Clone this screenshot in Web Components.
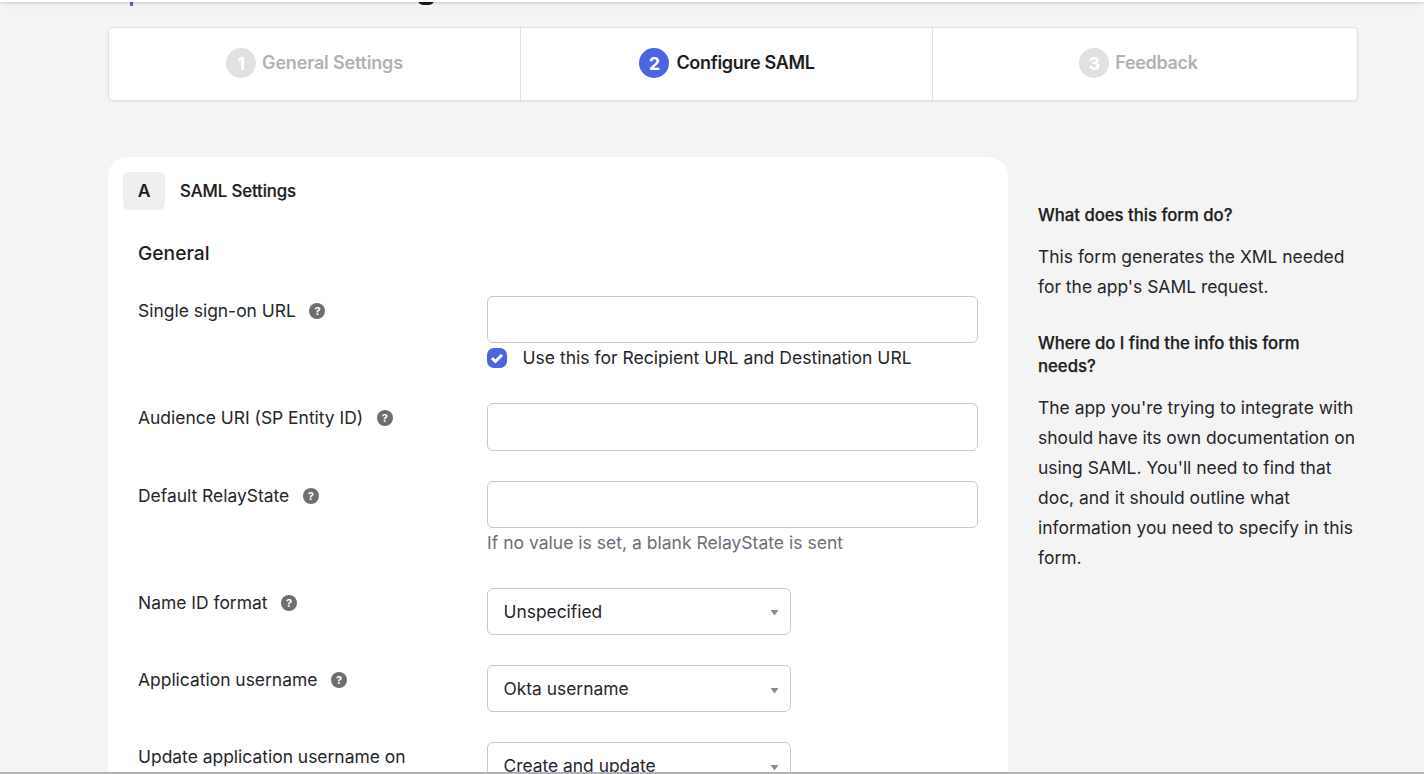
<!DOCTYPE html>
<html lang="en"><head><meta charset="utf-8"><title>Configure SAML</title>
<style>
html,body{margin:0;padding:0;height:774px;overflow:hidden;background:#f4f4f4;}
body{font-family:Inter,"Liberation Sans",sans-serif;color:#1d1d21;}
</style></head><body>
<app-page>
  <step-bar>
    <step-item num="1" state="off">General Settings</step-item>
    <step-item num="2" state="on">Configure SAML</step-item>
    <step-item num="3" state="off">Feedback</step-item>
  </step-bar>
  <main-columns>
    <form-card letter="A" title="SAML Settings">
      <form-row label="Single sign-on URL"><text-field></text-field><check-line>Use this for Recipient URL and Destination URL</check-line></form-row>
      <form-row label="Audience URI (SP Entity ID)"><text-field></text-field></form-row>
      <form-row label="Default RelayState"><text-field></text-field><hint-line>If no value is set, a blank RelayState is sent</hint-line></form-row>
      <form-row label="Name ID format"><select-field>Unspecified</select-field></form-row>
      <form-row label="Application username"><select-field>Okta username</select-field></form-row>
      <form-row label="Update application username on" nohelp><select-field>Create and update</select-field></form-row>
    </form-card>
    <side-help>
      <h3>What does this form do?</h3>
      <p>This form generates the XML needed for the app's SAML request.</p>
      <h3>Where do I find the info this form needs?</h3>
      <p>The app you're trying to integrate with should have its own documentation on using SAML. You'll need to find that doc, and it should outline what information you need to specify in this form.</p>
    </side-help>
  </main-columns>
</app-page>
<script>
customElements.define('app-page', class extends HTMLElement{constructor(){super();this.attachShadow({mode:'open'}).innerHTML=`<style>
  :host{display:block;position:relative;height:774px;overflow:hidden;background:#f4f4f4;box-sizing:border-box;padding:27px 66px 0 108px;}
  .top{position:absolute;left:0;right:0;top:0;height:2px;background:#fff;box-shadow:0 1px 3px rgba(0,0,0,.22),0 4px 16px rgba(0,0,0,.05);z-index:2;}
  .d1{position:absolute;top:0;left:130px;width:3px;height:6px;background:#4c64e2;z-index:1}
  .d2{position:absolute;top:0;left:418px;width:16px;height:5px;border-radius:0 0 8px 8px;background:#1d1d21;z-index:1}
  .bottom{position:absolute;left:0;right:0;bottom:0;height:2px;background:#b1b1b9;z-index:3;}
</style><div class="d1"></div><div class="d2"></div><div class="top"></div><slot></slot><div class="bottom"></div>`}});
customElements.define('step-bar', class extends HTMLElement{constructor(){super();this.attachShadow({mode:'open'}).innerHTML=`<style>
  :host{display:grid;grid-template-columns:412px 412px 1fr;height:74px;box-sizing:border-box;background:#fff;border:1px solid #e1e1e1;border-radius:5px;box-shadow:0 1px 2px rgba(0,0,0,.05);}
</style><slot></slot>`}});
customElements.define('step-item', class extends HTMLElement{constructor(){super();this.attachShadow({mode:'open'}).innerHTML=`<style>
  :host{display:flex;align-items:center;justify-content:center;gap:6px;font-size:18px;font-weight:600;letter-spacing:-.18px;color:#b2b2b2;border-right:1px solid #e1e1e1;padding-bottom:2px;}
  :host(:last-child){border-right:0;padding-right:13px;letter-spacing:-.33px}
  :host([state=on]){color:#1d1d21;gap:7px;letter-spacing:-.32px;padding-left:1px}
  .n{width:30px;height:30px;border-radius:50%;background:#e1e1e1;color:#fff;display:flex;align-items:center;justify-content:center;font-size:18px;font-weight:700;letter-spacing:0}
  :host([state=on]) .n{background:#4c64e2}
  .t{position:relative;top:-1px}
</style><span class="n">${this.getAttribute('num')}</span><span class="t"><slot></slot></span>`}});
customElements.define('main-columns', class extends HTMLElement{constructor(){super();this.attachShadow({mode:'open'}).innerHTML=`<style>
  :host{display:grid;grid-template-columns:900px 1fr;column-gap:30px;margin-top:56px;}
</style><slot></slot>`}});
customElements.define('form-card', class extends HTMLElement{constructor(){super();this.attachShadow({mode:'open'}).innerHTML=`<style>
  :host{display:block;background:#fff;border-radius:20px;padding:15px 30px 40px 15px;}
  .head{display:flex;align-items:center;gap:15px;height:38px;}
  .letter{width:42px;height:38px;border-radius:6px;background:#efefef;display:flex;align-items:center;justify-content:center;font-size:17.5px;font-weight:600;padding-bottom:2px;box-sizing:border-box}
  .title{font-size:16.8px;font-weight:500;letter-spacing:-.1px;-webkit-text-stroke:.2px currentColor}
  h2{margin:31px 0 31px 15px;font-size:19.2px;line-height:24px;font-weight:500}
  .rows{display:flex;flex-direction:column;gap:30px;margin-left:15px}
</style><div class="head"><div class="letter">${this.getAttribute('letter')}</div><div class="title">${this.getAttribute('title')}</div></div><h2>General</h2><div class="rows"><slot></slot></div>`}});
customElements.define('form-row', class extends HTMLElement{constructor(){super();this.attachShadow({mode:'open'}).innerHTML=`<style>
  :host{display:grid;grid-template-columns:349px 1fr;font-size:17.45px;color:#26262b}
  .l{display:flex;align-items:flex-start;gap:13.6px;line-height:24px;padding-top:3px;height:fit-content}
  .c{display:flex;flex-direction:column;align-items:flex-start}
</style><div class="l"><span>${this.getAttribute('label')}</span>${this.hasAttribute('nohelp')?'':'<help-dot></help-dot>'}</div><div class="c"><slot></slot></div>`}});
customElements.define('help-dot', class extends HTMLElement{constructor(){super();this.attachShadow({mode:'open'}).innerHTML=`<style>
  :host{display:inline-flex;width:16px;height:16px;margin-top:4px;border-radius:50%;background:#6e6e6e;color:#fff;align-items:center;justify-content:center;font-size:11px;font-weight:700;line-height:16px}
</style>?`}});
customElements.define('text-field', class extends HTMLElement{constructor(){super();this.attachShadow({mode:'open'}).innerHTML=`<style>
  :host{display:block;width:491px;height:47.25px;box-sizing:border-box;background:#fff;border:1px solid #c9c9cc;border-radius:6px;}
</style>`}});
customElements.define('select-field', class extends HTMLElement{constructor(){super();this.attachShadow({mode:'open'}).innerHTML=`<style>
  :host{display:flex;align-items:center;justify-content:space-between;width:304px;height:47.25px;box-sizing:border-box;background:#fff;border:1px solid #c9c9cc;border-radius:6px;padding:0 11px 0 15.5px;font-size:17.4px;}
  svg{width:9px;height:7px;margin-top:3px}
</style><span><slot></slot></span><svg viewBox="0 0 9 7"><path d="M0.5 1h8L4.5 6.5z" fill="#8a8a90"/></svg>`}});
customElements.define('check-line', class extends HTMLElement{constructor(){super();this.attachShadow({mode:'open'}).innerHTML=`<style>
  :host{display:flex;align-items:center;gap:15.5px;height:30px;font-size:17.55px;}
  svg{width:20px;height:20px;display:block}
  span{position:relative;top:-1px}
</style><svg viewBox="0 0 20 20"><rect width="20" height="20" rx="7" fill="#4c64e2"/><path d="M5 10.2l3.4 3.3L15 6.9" fill="none" stroke="#fff" stroke-width="3"/></svg><span><slot></slot></span>`}});
customElements.define('hint-line', class extends HTMLElement{constructor(){super();this.attachShadow({mode:'open'}).innerHTML=`<style>
  :host{display:block;height:30px;line-height:30px;font-size:17.55px;color:#6e6e78;}
</style><slot></slot>`}});
customElements.define('side-help', class extends HTMLElement{constructor(){super();this.attachShadow({mode:'open'}).innerHTML=`<style>
  :host{display:block;padding-top:47px;font-size:17.45px;color:#26262b}
  ::slotted(h3){margin:0;font-size:16.7px;line-height:23px;font-weight:500;color:#1d1d21;-webkit-text-stroke:.25px currentColor}
  ::slotted(p){margin:15px 0 30px;line-height:30px;}
</style><slot></slot>`}});
</script>
</body></html>
